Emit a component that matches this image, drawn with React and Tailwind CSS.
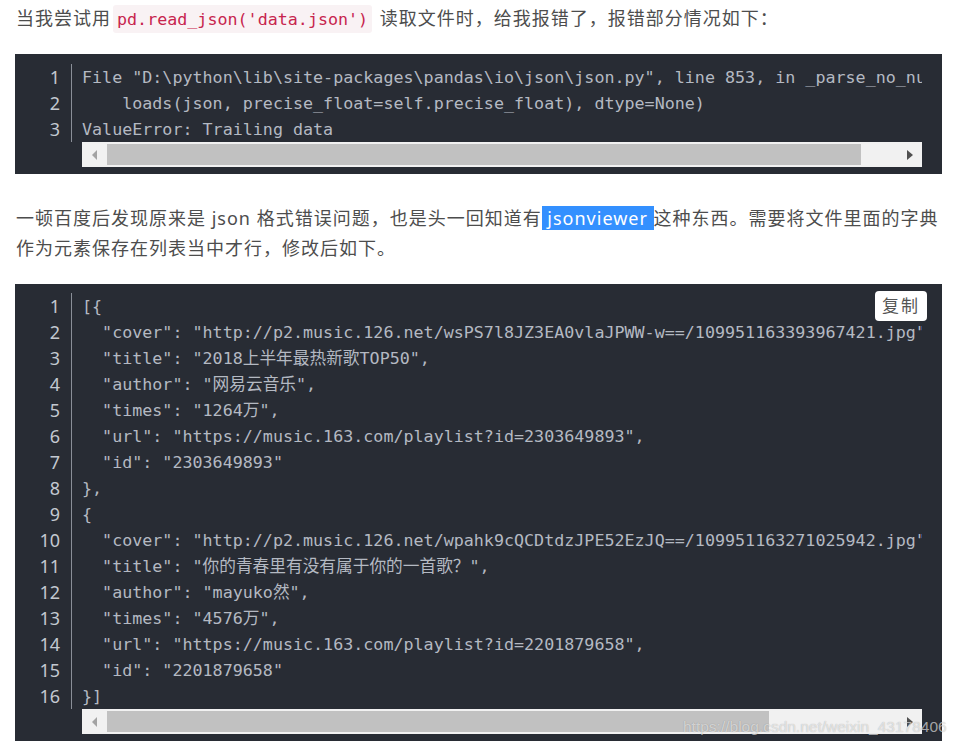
const sans = "font-['Noto_Sans','Noto_Sans_CJK_SC',sans-serif]";
const mono = "font-['DejaVu_Sans_Mono','Noto_Sans_CJK_SC',monospace]";

const errorLines = [
  'File "D:\\python\\lib\\site-packages\\pandas\\io\\json\\json.py", line 853, in _parse_no_numpy',
  "    loads(json, precise_float=self.precise_float), dtype=None)",
  "ValueError: Trailing data",
];

const jsonLines = [
  "[{",
  '  "cover": "http://p2.music.126.net/wsPS7l8JZ3EA0vlaJPWW-w==/109951163393967421.jpg",',
  '  "title": "2018上半年最热新歌TOP50",',
  '  "author": "网易云音乐",',
  '  "times": "1264万",',
  '  "url": "https://music.163.com/playlist?id=2303649893",',
  '  "id": "2303649893"',
  "},",
  "{",
  '  "cover": "http://p2.music.126.net/wpahk9cQCDtdzJPE52EzJQ==/109951163271025942.jpg",',
  '  "title": "你的青春里有没有属于你的一首歌？",',
  '  "author": "mayuko然",',
  '  "times": "4576万",',
  '  "url": "https://music.163.com/playlist?id=2201879658",',
  '  "id": "2201879658"',
  "}]",
];

const ScrollBar = ({ thumb }) => (
  <div className="ml-[67px] mr-[20px] h-[25px] bg-[#f1f1f1] flex items-center">
    <div className="w-[25px] h-full flex items-center justify-center">
      <svg width="6" height="10" viewBox="0 0 6 10">
        <path d="M5 0 L0 5 L5 10 Z" fill="#a3a3a3" />
      </svg>
    </div>
    <div className={`h-[21px] bg-[#c1c1c1] ${thumb}`}></div>
    <div className="flex-1"></div>
    <div className="w-[25px] h-full flex items-center justify-center">
      <svg width="6" height="10" viewBox="0 0 6 10">
        <path d="M0 0 L6 5 L0 10 Z" fill="#505050" />
      </svg>
    </div>
  </div>
);

const CodeBlock = ({ lines, thumb, pt, copy }) => (
  <div className={`relative bg-[#282c34] ${pt} pb-[7px]`}>
    <div className="flex">
      <div className="w-[57px] border-r border-[#8a8f98] pr-[11px] text-right">
        {lines.map((_, i) => (
          <div key={i} className={`${sans} text-[18px] leading-[26px] text-[#c3c8d0]`}>
            {i + 1}
          </div>
        ))}
      </div>
      <div className="flex-1 min-w-0 overflow-hidden pl-[10px] mr-[20px]">
        {lines.map((l, i) => (
          <div key={i} className={`${mono} text-[16.7px] leading-[26px] text-[#b4b9c2] whitespace-pre`}>
            {l}
          </div>
        ))}
      </div>
    </div>
    <ScrollBar thumb={thumb} />
    {copy && (
      <div className={`absolute top-[7px] right-[15px] w-[52px] h-[30px] bg-white rounded-[4px] flex items-center justify-center ${sans} text-[17px] text-[#555] tracking-[2px]`}>
        复制
      </div>
    )}
  </div>
);

export default function App() {
  return (
    <div className={`relative w-[965px] h-[747px] overflow-hidden bg-white pl-[15px] pr-[23px] ${sans}`}>
      <p className="pt-[3px] pl-[1px] h-[33px] text-[18px] leading-[30px] tracking-[1px] text-[#4d4d4d]">
        当我尝试用
        <code className={`${mono} text-[16.7px] leading-none tracking-normal text-[#c7254e] bg-[#f9f2f4] rounded-[3px] px-[4px] py-[4px] mx-[2px]`}>
          pd.read_json('data.json')
        </code>
        {" "}读取文件时，给我报错了，报错部分情况如下：
      </p>
      <div className="mt-[21px]">
        <CodeBlock lines={errorLines} thumb="w-[754px]" pt="pt-[10px]" />
      </div>
      <p className="mt-[29px] pl-[1px] text-[18px] leading-[30px] tracking-[1px] text-[#4d4d4d]">
        一顿百度后发现原来是 json 格式错误问题，也是头一回知道有
        <span className="bg-[#3390ff] text-white"> jsonviewer </span>
        这种东西。需要将文件里面的字典作为元素保存在列表当中才行，修改后如下。
      </p>
      <div className="mt-[21px]">
        <CodeBlock lines={jsonLines} thumb="w-[662px]" pt="pt-[9px]" copy />
      </div>
      <div className="absolute left-[683px] top-[715px] font-['Liberation_Sans',sans-serif] text-[15.5px] text-white/60 whitespace-nowrap [text-shadow:0_0_1px_rgba(0,0,0,0.3)]">
        https://blog.csdn.net/weixin_43178406
      </div>
    </div>
  );
}
